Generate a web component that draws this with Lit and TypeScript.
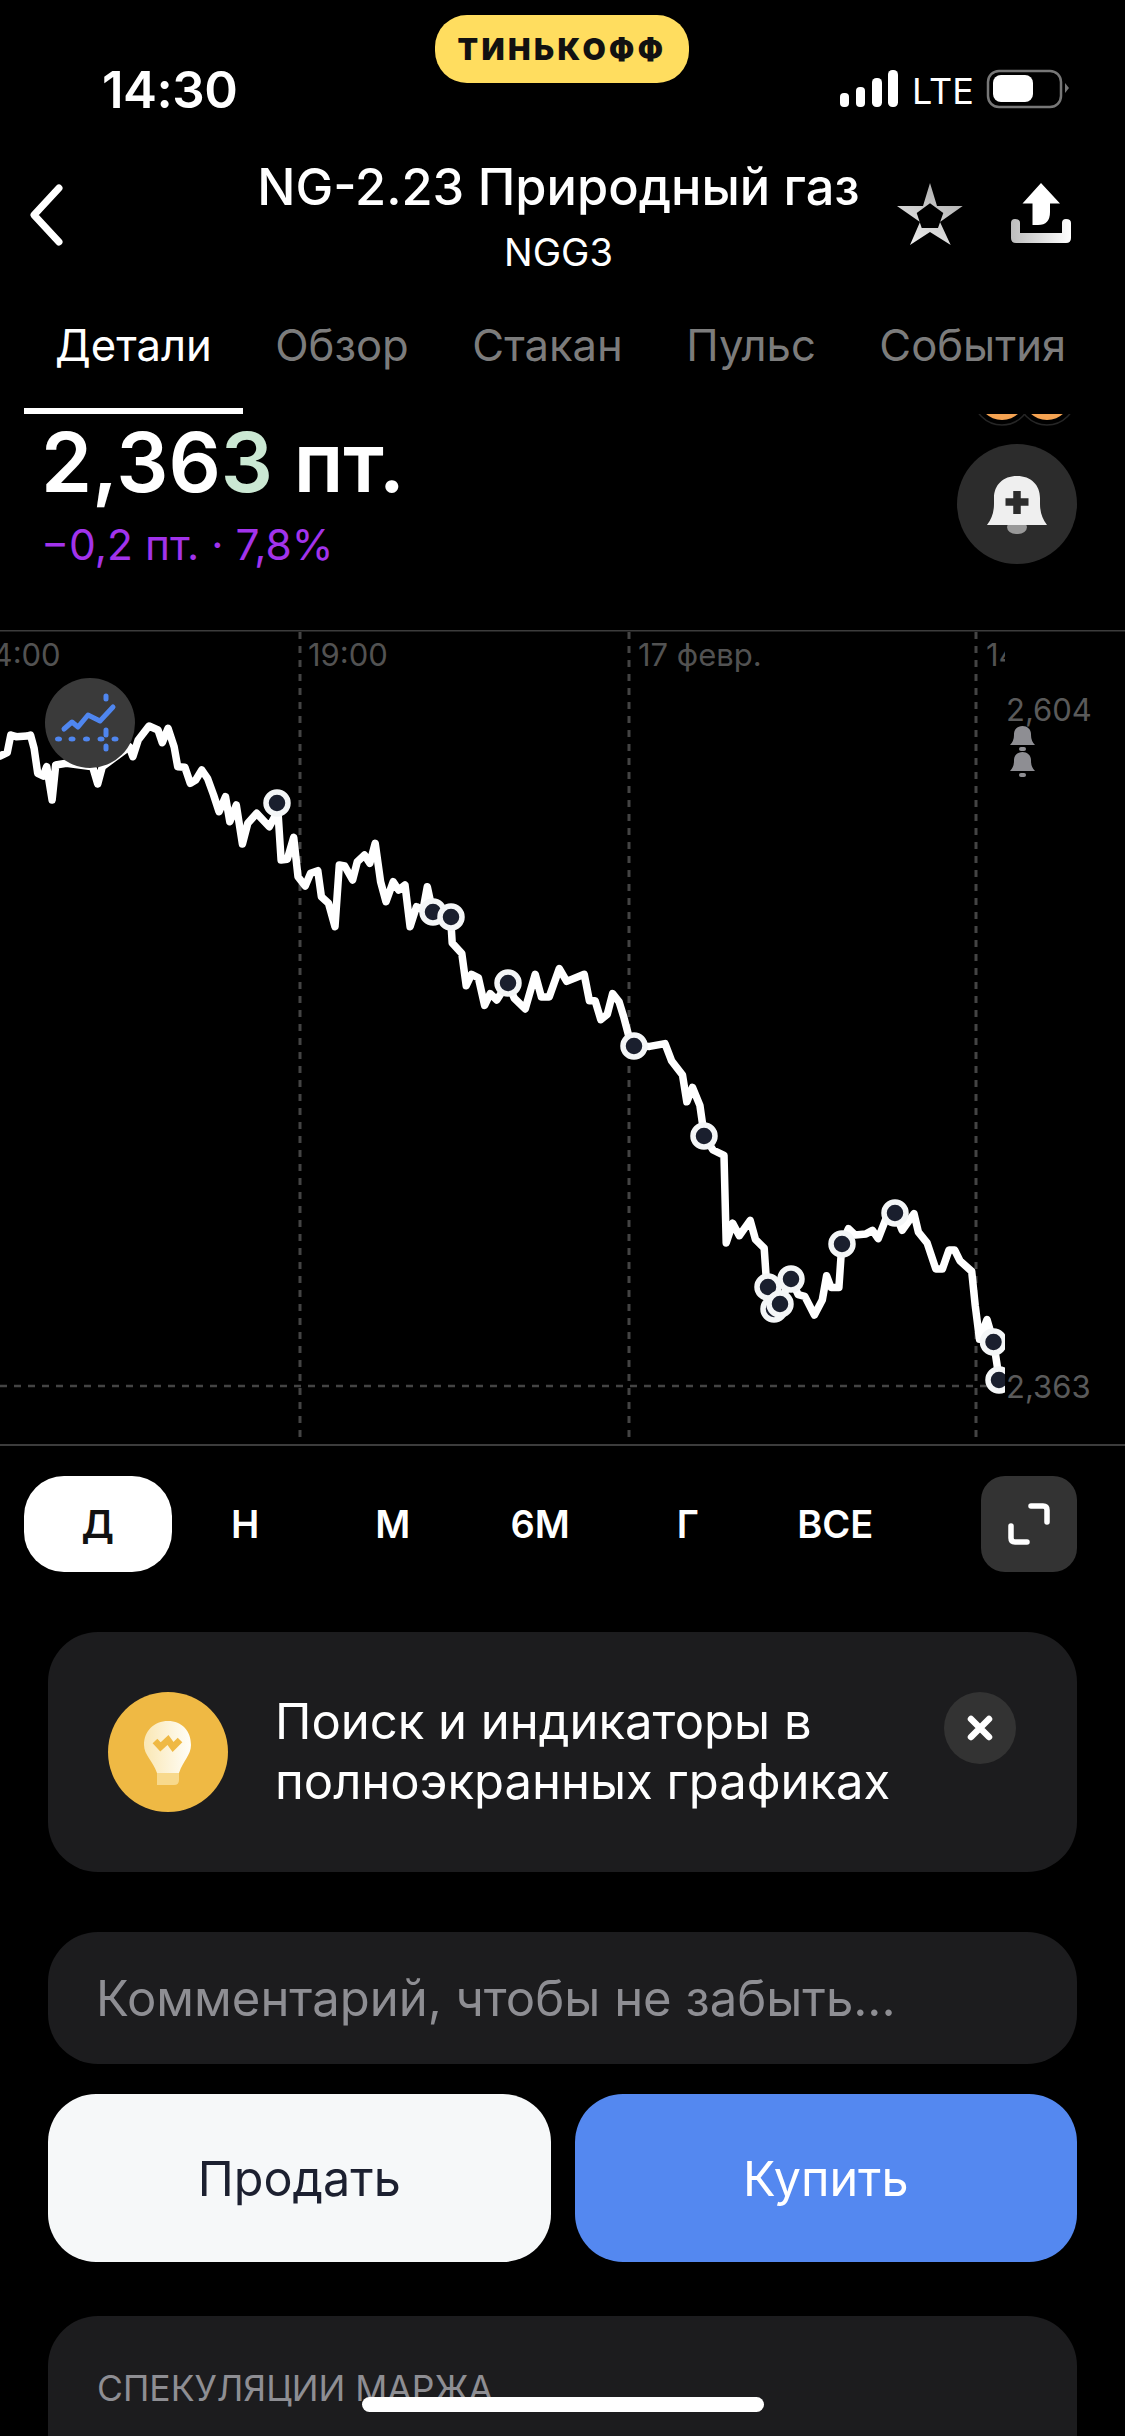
import { LitElement, html, svg, css } from "lit";
import { customElement, state } from "lit/decorators.js";

// traced off the reference, numbers are page pixels after scaling back from the crops
const traceA = [
  [0, 408], [20, 398], [30, 345], [45, 350], [75, 348], [85, 345], [95, 385], [105, 460], [120, 468], [130, 440],
  [145, 540], [155, 435], [185, 430], [258, 440], [272, 492], [285, 440], [360, 380], [370, 410], [385, 360],
  [415, 318], [440, 330], [452, 368], [468, 325], [485, 380], [495, 440], [515, 442], [530, 490], [545, 480],
  [562, 450], [578, 475], [595, 525], [610, 575], [628, 530], [640, 605], [658, 555], [675, 672], [690, 610],
  [715, 580], [750, 620], [765, 590], [771, 548], [775, 590], [783, 720], [800, 718], [818, 652], [830, 770],
  [850, 798], [865, 760], [885, 752], [895, 830], [915, 850], [933, 920], [945, 735], [960, 738], [982, 780],
  [995, 725], [1015, 705], [1030, 730], [1045, 670], [1060, 785], [1075, 845], [1095, 785], [1110, 810],
  [1128, 795], [1142, 920], [1160, 860], [1178, 870], [1190, 800], [1205, 875], [1255, 892],
].map(([x, y]) => [x / 2.785, 620 + y / 3]);

const traceB = [
  [28, 120], [50, 150], [60, 240], [72, 208], [88, 218], [102, 295], [115, 262], [130, 280], [155, 232], [170, 275],
  [195, 305], [218, 208], [232, 272], [250, 272], [273, 192], [290, 228], [330, 208], [342, 282], [355, 282],
  [368, 335], [383, 320], [395, 262], [410, 285], [420, 325], [432, 380], [445, 408], [480, 410], [515, 402],
  [530, 450], [555, 490], [565, 565], [578, 525], [595, 575], [605, 662], [625, 700], [650, 715], [655, 960],
  [670, 905], [685, 940], [710, 897], [722, 950], [742, 975], [748, 1083], [765, 1145], [778, 1130], [803, 1060],
  [820, 1105], [835, 1110], [857, 1162], [875, 1120], [885, 1052], [895, 1085], [913, 1085], [920, 962],
  [935, 920], [950, 938], [975, 935], [990, 925], [1003, 948], [1020, 895], [1042, 877], [1058, 925], [1085, 878],
  [1095, 930], [1115, 960], [1135, 1033], [1150, 1033], [1165, 980], [1178, 980], [1190, 1010], [1217, 1040],
  [1225, 1135], [1235, 1230], [1252, 1175], [1267, 1237], [1275, 1300], [1280, 1345],
].map(([x, y]) => [440 + x / 2.289, 900 + y / 2.8]);

const linePoints = [...traceA, ...traceB].map(([x, y]) => `${x.toFixed(1)},${y.toFixed(1)}`).join(" ");

const markers = [
  [277, 803], [433, 912], [451, 917], [508, 983], [634, 1046], [704, 1136], [768, 1287], [774, 1309],
  [780, 1304], [791, 1279], [842, 1244], [895, 1213], [993.5, 1342], [999, 1380],
];

const gridX = [300, 629, 976];
const timeLabels = [
  { x: -20, text: "14:00" },
  { x: 308, text: "19:00" },
  { x: 638, text: "17 февр." },
  { x: 986, text: "14:00" },
];

const tabs = ["Детали", "Обзор", "Стакан", "Пульс", "События"];
const ranges = ["Д", "Н", "М", "6М", "Г", "ВСЕ"];

@customElement("app-root")
export class AppRoot extends LitElement {
  static styles = css`
    :host {
      display: block;
      position: relative;
      width: 1125px;
      height: 2436px;
      overflow: hidden;
      background: #000;
      color: #fff;
      font-family: Inter, "Noto Sans", sans-serif;
    }

    svg {
      display: block;
    }

    .status {
      height: 150px;
      box-sizing: border-box;
      padding: 60px 55px 0 102px;
      display: flex;
      justify-content: space-between;
      align-items: flex-start;
    }

    .clock {
      font-size: 51px;
      line-height: 60px;
      font-weight: 600;
      letter-spacing: -0.5px;
    }

    .brand {
      position: absolute;
      left: 435px;
      top: 15px;
      width: 254px;
      height: 68px;
      border-radius: 32px;
      background: #ffdd5f;
      color: #111;
      display: flex;
      align-items: center;
      justify-content: center;
      font-size: 30px;
      font-weight: 900;
      letter-spacing: 3.4px;
    }

    .nav {
      height: 150px;
      box-sizing: border-box;
      display: grid;
      grid-template-columns: 112px 1fr 112px;
      position: relative;
    }

    .back {
      padding: 32px 0 0 26px;
    }

    .heading {
      text-align: center;
      margin-left: -116px;
      margin-right: -108px;
    }

    .title {
      font-size: 50.5px;
      line-height: 58px;
      font-weight: 500;
      padding-top: 8px;
    }

    .ticker {
      font-size: 38px;
      line-height: 44px;
      margin-top: 14px;
    }

    .nav-icons {
      position: absolute;
      right: 54px;
      top: 33px;
      display: flex;
      gap: 47px;
      align-items: flex-start;
    }

    .tabs {
      height: 114px;
      box-sizing: border-box;
      padding: 20px 0 0 55px;
      display: flex;
      gap: 63.5px;
      position: relative;
      font-size: 43.6px;
      line-height: 52px;
      color: #7c7c7c;
      white-space: nowrap;
    }

    .tabs .active {
      color: #fff;
    }

    .tabs .line {
      position: absolute;
      left: 24px;
      bottom: 0;
      width: 219px;
      height: 6px;
      background: #fff;
    }

    .quote {
      height: 216px;
      box-sizing: border-box;
      padding: 8px 0 0 41px;
      position: relative;
      overflow: hidden;
    }

    .price {
      font-size: 82px;
      line-height: 82px;
      font-weight: 600;
      white-space: nowrap;
    }

    .price .tick {
      color: #cbe8d3;
    }

    .change {
      font-size: 42.5px;
      line-height: 50px;
      margin-top: 16px;
      color: #a233ec;
      white-space: nowrap;
    }

    .avatars {
      position: absolute;
      left: 970px;
      top: 0;
    }

    .alert {
      position: absolute;
      left: 957px;
      top: 30px;
      width: 120px;
      height: 120px;
      border-radius: 50%;
      background: #2c2c2c;
    }

    .chart {
      position: relative;
      height: 816px;
      overflow: hidden;
    }

    .axis-time {
      position: absolute;
      top: 8px;
      font-size: 31px;
      line-height: 34px;
      color: #525252;
      white-space: nowrap;
    }

    .clip {
      position: absolute;
      inset: 0 120px 0 0;
      overflow: hidden;
    }

    .axis-price {
      position: absolute;
      left: 1006px;
      font-size: 31px;
      line-height: 34px;
      color: #5a5a5a;
    }

    .indicator {
      position: absolute;
      left: 45px;
      top: 48px;
      width: 90px;
      height: 90px;
      border-radius: 50%;
      background: #3a3a3a;
    }

    .small-bell {
      position: absolute;
      left: 1010px;
    }

    .ranges {
      margin-top: 30px;
      padding: 0 48px 0 24px;
      height: 96px;
      display: flex;
      align-items: center;
    }

    .range {
      width: 147.5px;
      height: 96px;
      border-radius: 40px;
      display: flex;
      align-items: center;
      justify-content: center;
      font-size: 38px;
      font-weight: 600;
    }

    .range.on {
      background: #fff;
      color: #111;
    }

    .expand {
      margin-left: auto;
      width: 96px;
      height: 96px;
      border-radius: 24px;
      background: #333;
    }

    .card {
      margin: 60px 48px 0;
      background: #1c1c1e;
      border-radius: 50px;
    }

    .tip {
      height: 240px;
      box-sizing: border-box;
      padding: 60px 60px 0;
      display: flex;
      position: relative;
    }

    .tip-text {
      margin-left: 47px;
      font-size: 49px;
      line-height: 60px;
      white-space: nowrap;
    }

    .close {
      position: absolute;
      left: 896px;
      top: 60px;
      width: 72px;
      height: 72px;
      border-radius: 50%;
      background: #333;
    }

    .comment {
      height: 132px;
      box-sizing: border-box;
      padding-left: 48px;
      display: flex;
      align-items: center;
      font-size: 49px;
      color: #8e8e93;
      white-space: nowrap;
    }

    .actions {
      margin: 30px 48px 0;
      display: flex;
      gap: 24px;
    }

    .action {
      flex: 1;
      height: 168px;
      border-radius: 48px;
      display: flex;
      align-items: center;
      justify-content: center;
      font-size: 48.5px;
    }

    .sell {
      background: #f6f8f9;
      color: #1c2030;
    }

    .buy {
      background: #5488f0;
    }

    .margin {
      margin-top: 54px;
      height: 300px;
      box-sizing: border-box;
      padding: 52px 0 0 49px;
      font-size: 35.5px;
      line-height: 42px;
      color: #8e8e93;
      white-space: nowrap;
    }

    .home {
      position: absolute;
      left: 362px;
      top: 2397px;
      width: 402px;
      height: 15px;
      border-radius: 8px;
      background: #fff;
    }
  `;

  @state() activeTab = 0;
  @state() activeRange = 0;

  smallBell(top: number) {
    return html`<svg class="small-bell" style="top:${top}px" width="25" height="26" viewBox="0 0 25 26">
      <path d="M0 19 Q4 15 4 9 V8 C4 3 8 0 12.5 0 C17 0 21 3 21 8 V9 Q21 15 25 19 Z" fill="#8e8e93" />
      <rect x="9" y="21" width="7" height="4" rx="2" fill="#8e8e93" />
    </svg>`;
  }

  renderChartLines() {
    return svg`
      <line x1="0" y1="630.5" x2="1125" y2="630.5" stroke="#3c3c3c" stroke-width="2" />
      <line x1="0" y1="1445" x2="1125" y2="1445" stroke="#3c3c3c" stroke-width="2" />
      ${gridX.map(
        (x) => svg`<line x1=${x} y1="632" x2=${x} y2="1444" stroke="#444" stroke-width="3" stroke-dasharray="7 7" />`
      )}
      <line x1="0" y1="1386" x2="1005" y2="1386" stroke="#444" stroke-width="2.5" stroke-dasharray="7 7" />
      <defs><clipPath id="plot"><rect x="0" y="630" width="1005" height="816" /></clipPath></defs>
      <g clip-path="url(#plot)">
        <polyline points=${linePoints} fill="none" stroke="#fff" stroke-width="7.5" stroke-linejoin="round" stroke-linecap="round" />
        ${markers.map(
          ([x, y]) => svg`<circle cx=${x} cy=${y} r="11" fill="#1a1f2e" stroke="#f4f6f7" stroke-width="5.5" />`
        )}
      </g>
    `;
  }

  render() {
    return html`
      <div class="brand">ТИНЬКОФФ</div>
      <div class="status">
        <div class="clock">14:30</div>
        <svg width="230" height="50" viewBox="840 65 230 50" style="margin-top:5px">
          <rect x="840" y="93" width="9" height="14" rx="4" fill="#fff" />
          <rect x="856" y="87" width="9" height="20" rx="4" fill="#fff" />
          <rect x="872" y="78" width="10" height="29" rx="4.5" fill="#fff" />
          <rect x="888" y="70" width="10" height="37" rx="4.5" fill="#fff" />
          <text x="912" y="104" font-size="36" fill="#fff" font-family="Inter, sans-serif">LTE</text>
          <rect x="988" y="71" width="73" height="36" rx="11" fill="none" stroke="#777" stroke-width="2.5" />
          <rect x="993" y="75" width="40" height="27" rx="8" fill="#fff" />
          <path d="M1065 83 L1069 88 L1065 93 Z" fill="#777" />
        </svg>
      </div>

      <div class="nav">
        <div class="back">
          <svg width="40" height="66" viewBox="0 0 40 66">
            <path d="M33 6 L8 33 L33 60" fill="none" stroke="#fff" stroke-width="7" stroke-linecap="round" stroke-linejoin="round" />
          </svg>
        </div>
        <div class="heading">
          <div class="title">NG-2.23 Природный газ</div>
          <div class="ticker">NGG3</div>
        </div>
        <div></div>
        <div class="nav-icons">
          <svg width="66" height="64" viewBox="0 0 66 64">
            <defs>
              <linearGradient id="starFill" x1="0.8" y1="0" x2="0.2" y2="1">
                <stop offset="0" stop-color="#a8a8a8" />
                <stop offset="1" stop-color="#f0f0f0" />
              </linearGradient>
            </defs>
            <path
              fill="url(#starFill)"
              fill-rule="evenodd"
              d="M33 0 L40 23 H65.7 L43 39 L53.7 62 L33 49 L13 62 L23 39 L0 23 H26 Z M33 20.3 L19.7 30 L24.7 45 H41 L46.3 30 Z"
            />
          </svg>
          <svg width="61" height="60" viewBox="1010 183 61 60">
            <defs>
              <linearGradient id="trayFill" x1="0" y1="0" x2="1" y2="0">
                <stop offset="0" stop-color="#bdbdbd" />
                <stop offset="1" stop-color="#fff" />
              </linearGradient>
            </defs>
            <path d="M1041 183 L1060 203.5 H1050 V212 Q1050 225 1038 225 H1032.5 V203.5 H1022.5 Z" fill="#fff" />
            <path d="M1011 223 Q1011 219 1015 219 Q1020 219 1020 223 V233 H1062 V223 Q1062 219 1066 219 Q1071 219 1071 223 V238 Q1071 243 1066 243 H1016 Q1011 243 1011 238 Z" fill="url(#trayFill)" />
          </svg>
        </div>
      </div>

      <div class="tabs">
        ${tabs.map((t, i) => html`<span class=${i === this.activeTab ? "active" : ""}>${t}</span>`)}
        <div class="line"></div>
      </div>

      <div class="quote">
        <svg class="avatars" width="110" height="14" viewBox="970 414 110 14">
          <circle cx="1002" cy="396" r="29" fill="none" stroke="#262626" stroke-width="1.5" />
          <circle cx="1047" cy="396" r="29" fill="none" stroke="#262626" stroke-width="1.5" />
          <circle cx="1002" cy="396" r="24" fill="#f5a352" />
          <circle cx="1047" cy="396" r="24" fill="#f5a352" />
        </svg>
        <div class="price">2,36<span class="tick">3</span> пт.</div>
        <div class="change">−0,2 пт. · 7,8%</div>
        <div class="alert">
          <svg width="120" height="120" viewBox="0 0 120 120">
            <rect x="50" y="76" width="20" height="14" rx="9" fill="#999" />
            <path d="M30 81 Q37 72 37 60 V54 C37 41 46 32 60 32 C74 32 83 41 83 54 V60 Q83 72 90 81 Z" fill="#efefef" />
            <path d="M60 47 V70 M48.5 58 H71.5" stroke="#2c2c2c" stroke-width="7.5" fill="none" />
          </svg>
        </div>
      </div>

      <div class="chart">
        <svg width="1125" height="816" viewBox="0 630 1125 816">${this.renderChartLines()}</svg>
        <div class="clip">
          ${timeLabels.map((l) => html`<div class="axis-time" style="left:${l.x}px">${l.text}</div>`)}
        </div>
        <div class="indicator">
          <svg width="90" height="90" viewBox="45 678 90 90">
            <polyline points="64,729 72,722 78,727 88,715 100,721 113,707" fill="none" stroke="#4f86ef" stroke-width="5" stroke-linecap="round" stroke-linejoin="round" />
            ${[58.5, 72, 86.5, 101, 115].map((x) => svg`<ellipse cx=${x} cy="739" rx="3.5" ry="2.5" fill="#4f86ef" />`)}
            <path d="M106 696 V699 M106 730 V735 M106 746 V749" stroke="#4f86ef" stroke-width="5" stroke-linecap="round" />
          </svg>
        </div>
        <div class="axis-price" style="top:63px">2,604</div>
        ${this.smallBell(96)} ${this.smallBell(122)}
        <div class="axis-price" style="top:740px">2,363</div>
      </div>

      <div class="ranges">
        ${ranges.map((r, i) => html`<div class="range ${i === this.activeRange ? "on" : ""}">${r}</div>`)}
        <div class="expand">
          <svg width="96" height="96" viewBox="0 0 96 96">
            <path d="M50 30 H62 Q66 30 66 34 V46 M30 50 V62 Q30 66 34 66 H46" fill="none" stroke="#fff" stroke-width="5.5" stroke-linecap="round" />
          </svg>
        </div>
      </div>

      <div class="card tip">
        <svg width="120" height="120" viewBox="0 0 120 120">
          <defs>
            <linearGradient id="bulbFill" x1="0" y1="0" x2="1" y2="0">
              <stop offset="0" stop-color="#fae7b4" />
              <stop offset="1" stop-color="#fffef8" />
            </linearGradient>
          </defs>
          <circle cx="60" cy="60" r="60" fill="#efb944" />
          <path d="M36 53 C36 39 46 29 60 29 C74 29 83 39 83 53 C83 63 75 69 71 81 H49 C45 69 36 63 36 53 Z" fill="url(#bulbFill)" />
          <path d="M49 81 H71 V88 Q71 93 66 93 H49 Z" fill="#f8d98c" />
          <polyline points="47,49 52.5,55 60,48 65,55 72,48" fill="none" stroke="#efb944" stroke-width="6.5" />
        </svg>
        <div class="tip-text">Поиск и индикаторы в<br />полноэкранных графиках</div>
        <div class="close">
          <svg width="72" height="72" viewBox="0 0 72 72">
            <path d="M27 27 L45 45 M45 27 L27 45" stroke="#fff" stroke-width="6.5" stroke-linecap="round" />
          </svg>
        </div>
      </div>

      <div class="card comment">Комментарий, чтобы не забыть...</div>

      <div class="actions">
        <div class="action sell">Продать</div>
        <div class="action buy">Купить</div>
      </div>

      <div class="card margin">СПЕКУЛЯЦИИ МАРЖА</div>
      <div class="home"></div>
    `;
  }
}
